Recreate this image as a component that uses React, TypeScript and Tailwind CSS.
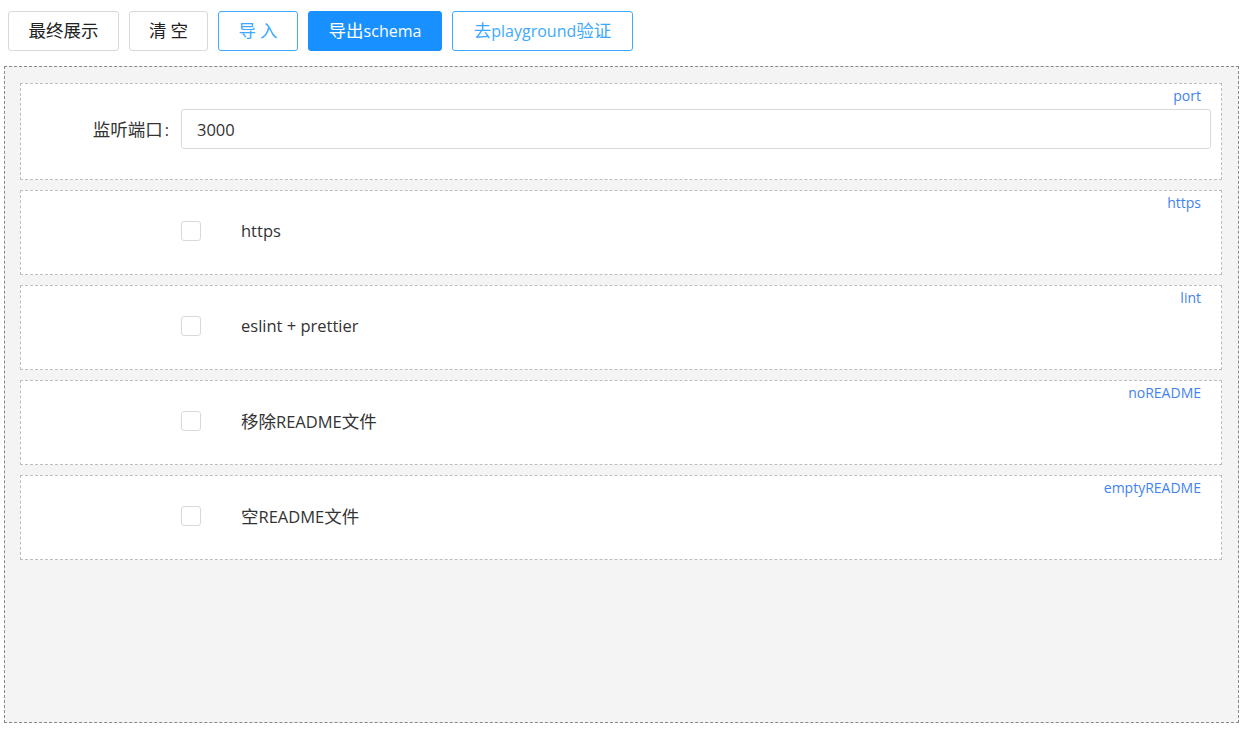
const font = { fontFamily: '"Open Sans", "Noto Sans CJK SC", sans-serif' };

const btnBase =
  "h-10 rounded-[3px] border px-[15px] text-[16px] leading-none flex items-center justify-center";

// Chinese glyphs in the reference render wider than Noto CJK at 16px
function T({ children }: { children: string }) {
  const parts = children.split(/([\u4e00-\u9fff]+)/);
  return (
    <span>
      {parts.map((p, i) =>
        /[\u4e00-\u9fff]/.test(p) ? (
          <span key={i} className="text-[17.5px]">
            {p}
          </span>
        ) : (
          <span key={i} className="whitespace-pre">{p}</span>
        )
      )}
    </span>
  );
}

function Card({ name, h, children }: { name: string; h: string; children: React.ReactNode }) {
  return (
    <div className={`relative border border-dashed border-[#bdbdbd] bg-white ${h}`}>
      <div className="absolute right-[20px] top-[1px] text-[14px] text-[#3f82f2]">{name}</div>
      {children}
    </div>
  );
}

function CheckRow({ name, label }: { name: string; label: string }) {
  return (
    <Card name={name} h="h-[85px]">
      <div className="flex h-full items-center pb-[3px] pl-[160px]">
        <span className="h-5 w-5 rounded-[3px] border border-[#d9d9d9] bg-white" />
        <span className="ml-10 text-[16.5px] text-[#333]">
          <T>{label}</T>
        </span>
      </div>
    </Card>
  );
}

export default function App() {
  return (
    <div className="min-h-screen bg-white text-[#222]" style={font}>
      <div className="flex gap-[10px] px-[8px] pt-[11px]">
        <button className={`${btnBase} w-[111px] border-[#d9d9d9] text-[#222]`}>
          <T>最终展示</T>
        </button>
        <button className={`${btnBase} w-[79px] border-[#d9d9d9] text-[#222]`}>
          <T>清 空</T>
        </button>
        <button className={`${btnBase} w-[80px] border-[#40a9ff] text-[#40a9ff]`}>
          <T>导 入</T>
        </button>
        <button className={`${btnBase} w-[134px] border-[#1890ff] bg-[#1890ff] text-white`}>
          <T>导出schema</T>
        </button>
        <button className={`${btnBase} w-[181px] border-[#40a9ff] text-[#40a9ff]`}>
          <T>去playground验证</T>
        </button>
      </div>
      <div className="mx-[4px] mt-[15px] flex h-[657px] flex-col gap-[10px] border border-dashed border-[#888] bg-[#f4f4f4] pl-[15px] pr-[16px] pt-[16px]">
        <Card name="port" h="h-[97px]">
          <div className="flex items-center pr-[10px] pt-[25px]">
            <div className="w-[160px] pr-[10px] text-right text-[16px] text-[#333]">
              <T>监听端口</T>
              <span className="ml-[2px] mr-[2px]">:</span>
            </div>
            <input
              readOnly
              value="3000"
              className="h-10 flex-1 rounded-[3px] border border-[#d9d9d9] px-[15px] text-[16.5px] text-[#333] outline-none"
              style={font}
            />
          </div>
        </Card>
        <CheckRow name="https" label="https" />
        <CheckRow name="lint" label="eslint + prettier" />
        <CheckRow name="noREADME" label="移除README文件" />
        <CheckRow name="emptyREADME" label="空README文件" />
      </div>
    </div>
  );
}
